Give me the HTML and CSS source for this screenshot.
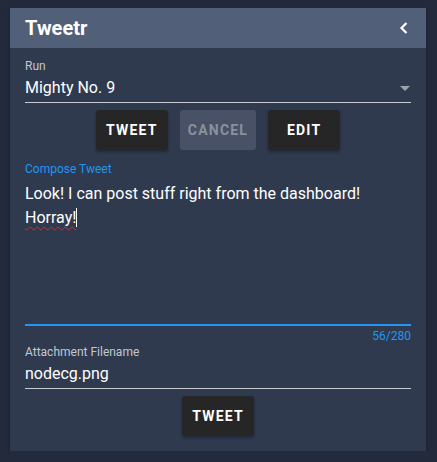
FILE: index.html
```html
<!DOCTYPE html>
<html lang="en">
<head>
  <meta charset="UTF-8">
  <title>Tweetr</title>
  <link rel="stylesheet" href="styles.css">
</head>
<body>
  <div id="panel">
    <div id="panel-header">
      <span class="panel-title">Tweetr</span>
      <svg class="collapse" width="12" height="14" viewBox="0 0 12 14">
        <path d="M8.5 2 L3.5 7 L8.5 12" fill="none" stroke="#fff" stroke-width="2.2"/>
      </svg>
    </div>
    <div id="panel-body">
      <div class="field">
        <label class="field-label">Run</label>
        <div class="field-input select">
          <span>Mighty No. 9</span>
          <span class="caret"></span>
        </div>
      </div>

      <div class="button-row">
        <a class="btn">Tweet</a>
        <a class="btn disabled">Cancel</a>
        <a class="btn">Edit</a>
      </div>

      <div class="field compose">
        <label class="field-label focused">Compose Tweet</label>
        <div class="textarea">Look! I can post stuff right from the dashboard!<br><span class="misspelled">Horray!</span><span class="cursor"></span></div>
        <div class="counter">56/280</div>
      </div>

      <div class="field">
        <label class="field-label">Attachment Filename</label>
        <div class="field-input">nodecg.png</div>
      </div>

      <div class="button-row">
        <a class="btn">Tweet</a>
      </div>
    </div>
  </div>
</body>
</html>
```

FILE: styles.css
```css
body {
  background-color: #222a3b;
  margin: 0;
  padding: 8px 11px 0 10px;
  font-family: Roboto, "Liberation Sans", sans-serif;
  color: #fff;
}

#panel {
  background-color: #2f3a4f;
  box-shadow: 0 2px 3px rgba(0, 0, 0, 0.35);
  height: 443px;
}

#panel-header {
  background-color: #525f78;
  height: 40px;
  display: flex;
  align-items: center;
  justify-content: space-between;
  padding: 0 16px 0 15px;
}

.panel-title {
  font-size: 20px;
  font-weight: 700;
}

#panel-body {
  padding: 10px 15px 0 15px;
}

.field-label {
  display: block;
  font-size: 12px;
  color: #c3c8d0;
  line-height: 16px;
}

.field-label.focused {
  color: #2196f3;
}

.field-input {
  font-size: 16px;
  line-height: 24px;
  padding: 2px 0 2px 0;
  border-bottom: 1px solid #c9ccd2;
}

.select {
  display: flex;
  justify-content: space-between;
  align-items: center;
}

.caret {
  width: 0;
  height: 0;
  border-left: 5px solid transparent;
  border-right: 5px solid transparent;
  border-top: 5px solid #9ca3ae;
  margin-right: 1px;
}

.button-row {
  display: flex;
  justify-content: center;
  gap: 12px;
  margin: 7px 0 0 0;
}

.btn {
  background-color: #262626;
  color: #fff;
  border-radius: 3px;
  height: 40px;
  min-width: 72px;
  padding: 0 8px;
  box-sizing: border-box;
  display: flex;
  align-items: center;
  justify-content: center;
  font-size: 14px;
  font-weight: 700;
  letter-spacing: 1.2px;
  text-transform: uppercase;
  box-shadow: 0 2px 3px rgba(0, 0, 0, 0.3);
  cursor: pointer;
}

.btn.disabled {
  background-color: #485166;
  color: #8b919d;
  box-shadow: none;
}

.compose {
  margin-top: 11px;
}

.textarea {
  font-size: 16px;
  line-height: 24px;
  height: 142px;
  padding-top: 5px;
  border-bottom: 2px solid #2196f3;
}

.misspelled {
  text-decoration: underline wavy #e0262d;
  text-decoration-thickness: 1px;
  text-underline-offset: 3px;
}

.cursor {
  display: inline-block;
  width: 1px;
  height: 19px;
  background: #fff;
  vertical-align: -4px;
}

.counter {
  text-align: right;
  font-size: 12px;
  color: #2196f3;
  line-height: 16px;
  margin-top: 2px;
}
```
